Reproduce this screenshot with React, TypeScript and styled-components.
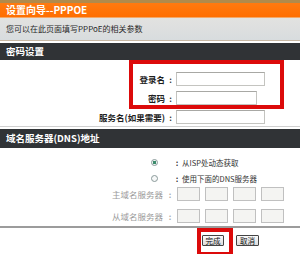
import React from "react";
import styled, { createGlobalStyle } from "styled-components";

const GlobalStyle = createGlobalStyle`
  html, body {
    margin: 0;
    padding: 0;
    background: #ffffff;
  }
  body {
    font-family: "Noto Sans CJK SC", "Liberation Sans", sans-serif;
  }
`;

const Page = styled.div`
  position: relative;
  width: 300px;
  height: 254px;
  overflow: hidden;
  background: #ffffff;
  display: flex;
  flex-direction: column;
`;

const TitleBar = styled.div`
  height: 14px;
  border-top: 3px solid #b08a4c;
  border-bottom: 1px solid #f3a868;
  background: linear-gradient(#ff7a10, #ff6e00);
  color: #ffffff;
  font-size: 10px;
  font-weight: bold;
  line-height: 14px;
  padding-left: 6px;
`;

const InfoBar = styled.div`
  height: 22px;
  background: linear-gradient(#e2e2e0, #d8dcde);
  color: #2a2a2a;
  font-size: 8px;
  line-height: 22px;
  padding-left: 6px;
  border-bottom: 1px solid #c8b8a4;
`;

const SectionBar = styled.div<{ $h: number; $top?: number }>`
  height: ${(p) => p.$h}px;
  margin-top: ${(p) => p.$top ?? 0}px;
  background: #303336;
  color: #ffffff;
  font-size: 9.5px;
  font-weight: bold;
  line-height: ${(p) => p.$h}px;
  padding-left: 6px;
`;

const Form = styled.div`
  position: relative;
  display: flex;
  flex-direction: column;
  gap: 5px;
  padding: 12px 0 2px;
  border-bottom: 1px solid #d0d0d0;
`;

const Row = styled.div`
  display: flex;
  align-items: center;
  height: 14px;
`;

const Label = styled.span<{ $w: number; $muted?: boolean }>`
  width: ${(p) => p.$w}px;
  text-align: right;
  font-size: 8.5px;
  font-weight: ${(p) => (p.$muted ? "normal" : "bold")};
  color: ${(p) => (p.$muted ? "#9a9a9a" : "#1e1e1e")};
  white-space: nowrap;
`;

const Colon = styled.span<{ $w: number; $muted?: boolean }>`
  width: ${(p) => p.$w}px;
  text-align: center;
  font-size: 8px;
  font-weight: bold;
  color: ${(p) => (p.$muted ? "#a8a8a8" : "#333333")};
`;

const TextInput = styled.div<{ $w: number }>`
  width: ${(p) => p.$w}px;
  height: 14px;
  box-sizing: border-box;
  border: 1px solid #c4c4c0;
  border-top-color: #a8a8a4;
  background: #ffffff;
`;

const Highlight = styled.div<{ $x: number; $y: number; $w: number; $h: number }>`
  position: absolute;
  left: ${(p) => p.$x}px;
  top: ${(p) => p.$y}px;
  width: ${(p) => p.$w}px;
  height: ${(p) => p.$h}px;
  box-sizing: border-box;
  border: 4px solid #dc0a0a;
  pointer-events: none;
`;

const DnsBlock = styled.div`
  display: flex;
  flex-direction: column;
  padding: 6px 0 3px;
  border-bottom: 2px solid #9c9c9c;
`;

const RadioRow = styled.div`
  display: flex;
  align-items: center;
  height: 16px;
`;

const RadioCell = styled.span`
  width: 172px;
  display: flex;
  justify-content: flex-end;
  padding-right: 14px;
  box-sizing: border-box;
`;

const Radio = styled.span<{ $checked?: boolean }>`
  width: 7px;
  height: 7px;
  box-sizing: border-box;
  border-radius: 50%;
  border: 1px solid #8a9a9a;
  background: ${(p) =>
    p.$checked
      ? "radial-gradient(circle, #3c8c6c 0 1.5px, #eef4f2 2px)"
      : "#f6f8f8"};
`;

const RadioText = styled.span`
  font-size: 7.5px;
  color: #333333;
  white-space: nowrap;
`;

const DnsGroup = styled.div`
  display: flex;
  flex-direction: column;
  gap: 8px;
  margin-top: 1px;
`;

const IpBoxes = styled.div`
  display: flex;
  gap: 5px;
`;

const IpBox = styled.div`
  width: 23px;
  height: 14px;
  box-sizing: border-box;
  border: 1px solid #c0c0c0;
  background: #f4f4f2;
`;

const Actions = styled.div`
  position: relative;
  display: flex;
  align-items: center;
  gap: 12px;
  padding: 7px 0 0 202px;
`;

const Button = styled.div<{ $w: number }>`
  width: ${(p) => p.$w}px;
  height: 11px;
  box-sizing: border-box;
  border: 1px solid #444;
  border-radius: 1px;
  background: linear-gradient(#fafafa, #dcdcdc);
  font-size: 7.5px;
  line-height: 9px;
  text-align: center;
  color: #111;
`;

const App: React.FC = () => {
  const dnsRows = ["主域名服务器", "从域名服务器"];
  return (
    <Page>
      <GlobalStyle />
      <TitleBar>设置向导--PPPOE</TitleBar>
      <InfoBar>您可以在此页面填写PPPoE的相关参数</InfoBar>
      <SectionBar $h={17} $top={2}>
        密码设置
      </SectionBar>

      <Form>
        <Row>
          <Label $w={165}>登录名</Label>
          <Colon $w={11}>:</Colon>
          <TextInput $w={89} />
        </Row>
        <Row>
          <Label $w={165}>密码</Label>
          <Colon $w={11}>:</Colon>
          <TextInput $w={81} />
        </Row>
        <Row>
          <Label $w={165}>服务名(如果需要)</Label>
          <Colon $w={11}>:</Colon>
          <TextInput $w={89} />
        </Row>
        <Highlight $x={129} $y={0} $w={155} $h={49} />
      </Form>

      <SectionBar $h={19} $top={2}>
        域名服务器(DNS)地址
      </SectionBar>

      <DnsBlock>
        <RadioRow>
          <RadioCell>
            <Radio $checked />
          </RadioCell>
          <Colon $w={10}>:</Colon>
          <RadioText>从ISP处动态获取</RadioText>
        </RadioRow>
        <RadioRow>
          <RadioCell>
            <Radio />
          </RadioCell>
          <Colon $w={10}>:</Colon>
          <RadioText>使用下面的DNS服务器</RadioText>
        </RadioRow>
        <DnsGroup>
          {dnsRows.map((name) => (
            <Row key={name}>
              <Label $w={163} $muted>
                {name}
              </Label>
              <Colon $w={14} $muted>
                :
              </Colon>
              <IpBoxes>
                <IpBox />
                <IpBox />
                <IpBox />
                <IpBox />
              </IpBoxes>
            </Row>
          ))}
        </DnsGroup>
      </DnsBlock>

      <Actions>
        <Button $w={22}>完成</Button>
        <Button $w={23}>取消</Button>
        <Highlight $x={197} $y={0} $w={36} $h={28} />
      </Actions>
    </Page>
  );
};

export default App;
